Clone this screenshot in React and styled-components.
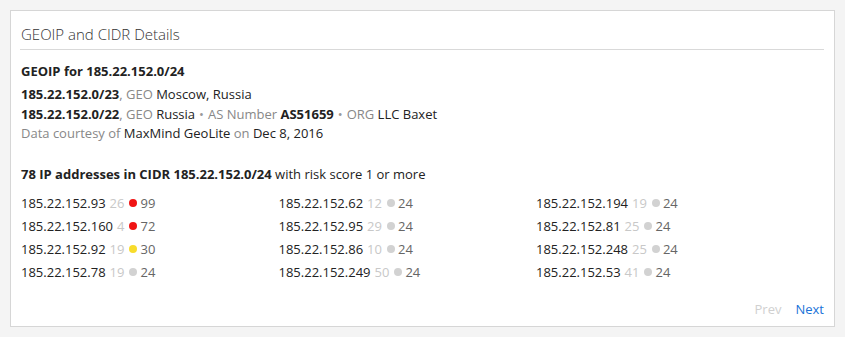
import React from "react";
import styled, { createGlobalStyle } from "styled-components";

const Global = createGlobalStyle`
  html, body { margin: 0; padding: 0; background: #f4f4f4; }
  body { font-family: "Open Sans", "Noto Sans", sans-serif; font-size: 13px; color: #222; }
  * { box-sizing: border-box; }
`;

const Page = styled.div`
  padding: 10px;
  width: 845px;
`;

const Card = styled.section`
  width: 825px;
  height: 317px;
  background: #fff;
  border: 1px solid #d6d6d6;
  padding: 0 10px 0 9px;
  display: flex;
  flex-direction: column;
`;

const Title = styled.h2`
  margin: 0;
  padding: 12px 0 4px 1px;
  font-size: 15px;
  font-weight: 300;
  color: #333;
  line-height: 22px;
  border-bottom: 1px solid #d9d9d9;
`;

const Body = styled.div`
  padding: 11px 0 0 1px;
  flex: 1;
  display: flex;
  flex-direction: column;
`;

const Heading = styled.div`
  font-weight: 700;
  line-height: 20px;
  margin-bottom: 4px;
`;

const Line = styled.div`
  line-height: 19.5px;
`;

const Muted = styled.span`
  color: #888;
`;

const Strong = styled.span`
  font-weight: 700;
`;

const Sep = styled.span`
  color: #999;
  margin: 0 4px;
`;

const CidrHead = styled.div`
  margin-top: 20px;
  line-height: 20px;
  margin-bottom: 8px;
`;

const Grid = styled.div`
  display: grid;
  grid-template-columns: repeat(3, 257.5px);
  grid-auto-rows: 23px;
  align-items: center;
`;

const Entry = styled.div`
  display: flex;
  align-items: center;
  white-space: nowrap;
`;

const Count = styled.span`
  color: #c8c8c8;
  margin-left: 4px;
`;

const Dot = styled.span`
  display: inline-block;
  width: 8px;
  height: 8px;
  border-radius: 50%;
  margin: 0 3px 0 5px;
  background: ${(p) => p.$color};
`;

const Score = styled.span`
  color: #666;
`;

const Pager = styled.div`
  margin-top: auto;
  display: flex;
  justify-content: flex-end;
  gap: 14px;
  padding: 0 0 7px;
  line-height: 20px;
`;

const PageLink = styled.a`
  color: ${(p) => (p.$disabled ? "#d0d0d0" : "#1a73d9")};
  text-decoration: none;
  cursor: ${(p) => (p.$disabled ? "default" : "pointer")};
`;

const colors = { red: "#f01414", yellow: "#f8dc2c", gray: "#d2d2d2" };

const ips = [
  ["185.22.152.93", 26, "red", 99],
  ["185.22.152.62", 12, "gray", 24],
  ["185.22.152.194", 19, "gray", 24],
  ["185.22.152.160", 4, "red", 72],
  ["185.22.152.95", 29, "gray", 24],
  ["185.22.152.81", 25, "gray", 24],
  ["185.22.152.92", 19, "yellow", 30],
  ["185.22.152.86", 10, "gray", 24],
  ["185.22.152.248", 25, "gray", 24],
  ["185.22.152.78", 19, "gray", 24],
  ["185.22.152.249", 50, "gray", 24],
  ["185.22.152.53", 41, "gray", 24],
];

export default function App() {
  return (
    <Page>
      <Global />
      <Card>
        <Title>GEOIP and CIDR Details</Title>
        <Body>
          <Heading>GEOIP for 185.22.152.0/24</Heading>
          <Line>
            <Strong>185.22.152.0/23</Strong>
            <Muted>, GEO</Muted> Moscow, Russia
          </Line>
          <Line>
            <Strong>185.22.152.0/22</Strong>
            <Muted>, GEO</Muted> Russia
            <Sep>•</Sep>
            <Muted>AS Number</Muted> <Strong>AS51659</Strong>
            <Sep>•</Sep>
            <Muted>ORG</Muted> LLC Baxet
          </Line>
          <Line>
            <Muted>Data courtesy of</Muted> MaxMind GeoLite <Muted>on</Muted> Dec 8, 2016
          </Line>
          <CidrHead>
            <Strong>78 IP addresses in CIDR 185.22.152.0/24</Strong> with risk score 1 or more
          </CidrHead>
          <Grid>
            {ips.map(([ip, n, c, s]) => (
              <Entry key={ip}>
                {ip}
                <Count>{n}</Count>
                <Dot $color={colors[c]} />
                <Score>{s}</Score>
              </Entry>
            ))}
          </Grid>
          <Pager>
            <PageLink $disabled>Prev</PageLink>
            <PageLink href="#">Next</PageLink>
          </Pager>
        </Body>
      </Card>
    </Page>
  );
}
